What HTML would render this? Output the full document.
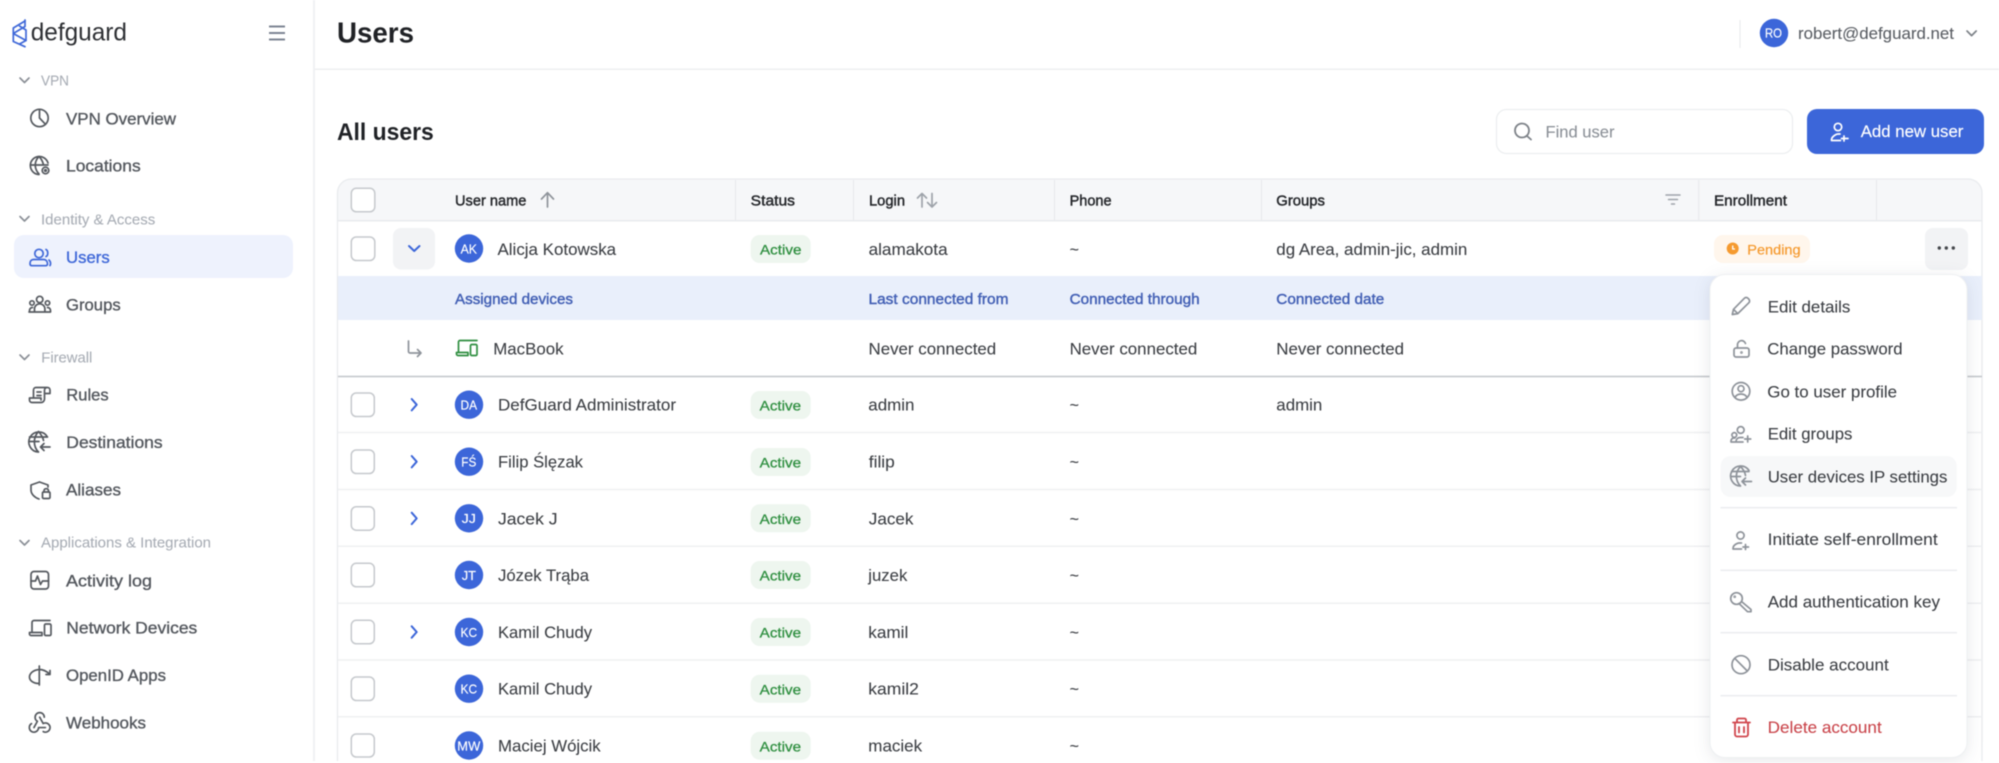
<!DOCTYPE html>
<html lang="en"><head><meta charset="utf-8"><title>Users</title>
<style>
html,body{margin:0;padding:0;background:#fff;width:1999px;height:763px;overflow:hidden}
svg{display:block;filter:blur(.4px)}
text{font-family:"Liberation Sans",sans-serif;font-size:17px;fill:#3c3f44;stroke:#3c3f44;stroke-width:.08}
.nav{fill:#54585e;stroke:#54585e;stroke-width:.35}
.sec{font-size:14.5px;fill:#a9aeb6;stroke:#a9aeb6;stroke-width:.1}
.hd{font-size:15px;fill:#26282c;stroke:#26282c;stroke-width:.45}
.sub{font-size:14.5px;fill:#4360b5;stroke:#4360b5;stroke-width:.42}
.act{font-size:14px;fill:#2f8f40;stroke:#2f8f40;stroke-width:.3}
.av{font-size:13px;fill:#fff;stroke:#fff;stroke-width:.15}
.i{fill:none;stroke:#55595f;stroke-width:1.7;stroke-linecap:round;stroke-linejoin:round}
.mi{fill:none;stroke:#8e939a;stroke-width:1.7;stroke-linecap:round;stroke-linejoin:round}
.cb{fill:#fff;stroke:#c6c9cd;stroke-width:1.5}
.sep{stroke:#eff0f2;stroke-width:1.5}
.dv{stroke:#e9ebee;stroke-width:1.3}
.colsep{stroke:#e6e8eb;stroke-width:1}
.chev{fill:none;stroke:#3c66d9;stroke-width:2;stroke-linecap:round;stroke-linejoin:round}
</style></head><body>
<svg width="1999" height="763" viewBox="0 0 1999 763" xmlns="http://www.w3.org/2000/svg">
<rect width="1999" height="763" fill="#fff"/>

<!-- sidebar -->
<rect x="313" y="0" width="2" height="761" fill="#f0f1f3"/>
<g fill="none" stroke="#3f68d8" stroke-width="1.7" stroke-linejoin="round" stroke-linecap="round">
<path d="M25 21L13.300 28V41.500L25 46.700"/>
<path d="M25 20v6.500L13.300 33.500"/>
<path d="M13.300 33.500L26 40.500V30L19.500 26"/>
<path d="M26 40.500L19.500 44"/>
</g>
<text x="30.700" y="40.700" textLength="96.300" lengthAdjust="spacingAndGlyphs" style="font-size:25px;fill:#2e3034;stroke:none">defguard</text>
<path d="M269 26.500h16M269 33h16M269 39.500h16" stroke="#7d8593" stroke-width="2"/>

<g fill="none" stroke="#8b9097" stroke-width="1.700" stroke-linecap="round" stroke-linejoin="round">
<path d="M20 78l4.500 4.500L29 78"/><path d="M20 216.500l4.500 4.500 4.500-4.500"/><path d="M20 355l4.500 4.500 4.500-4.500"/><path d="M20 540.500l4.500 4.500 4.500-4.500"/>
</g>
<text class="sec" x="41" y="85.700" textLength="28" lengthAdjust="spacingAndGlyphs">VPN</text>
<text class="sec" x="41" y="224.300" textLength="114.300" lengthAdjust="spacingAndGlyphs">Identity &amp; Access</text>
<text class="sec" x="41.300" y="362.300" textLength="51" lengthAdjust="spacingAndGlyphs">Firewall</text>
<text class="sec" x="41" y="547.700" textLength="170" lengthAdjust="spacingAndGlyphs">Applications &amp; Integration</text>

<rect x="14" y="235" width="279" height="43" rx="10" fill="#eef2fd"/>

<text class="nav" x="66" y="124.300" textLength="110" lengthAdjust="spacingAndGlyphs">VPN Overview</text>
<text class="nav" x="66" y="171.500" textLength="74.700" lengthAdjust="spacingAndGlyphs">Locations</text>
<text class="nav" x="66" y="263" textLength="43.700" lengthAdjust="spacingAndGlyphs" style="fill:#3f68d8;stroke:#3f68d8">Users</text>
<text class="nav" x="66" y="310.300" textLength="54.700" lengthAdjust="spacingAndGlyphs">Groups</text>
<text class="nav" x="66.300" y="400.700" textLength="42.400" lengthAdjust="spacingAndGlyphs">Rules</text>
<text class="nav" x="66.300" y="448" textLength="96.400" lengthAdjust="spacingAndGlyphs">Destinations</text>
<text class="nav" x="66" y="495.300" textLength="55" lengthAdjust="spacingAndGlyphs">Aliases</text>
<text class="nav" x="66" y="586.300" textLength="86" lengthAdjust="spacingAndGlyphs">Activity log</text>
<text class="nav" x="66.300" y="633.600" textLength="131" lengthAdjust="spacingAndGlyphs">Network Devices</text>
<text class="nav" x="66" y="681" textLength="100" lengthAdjust="spacingAndGlyphs">OpenID Apps</text>
<text class="nav" x="66" y="728.300" textLength="80" lengthAdjust="spacingAndGlyphs">Webhooks</text>

<!-- nav icons -->
<g class="i">
<circle cx="39.500" cy="118" r="8.700"/><path d="M39.500 109.300V118l6 6.300"/>
<path d="M48 163a9 9 0 1 0-9 11.500M30.500 165h17.500M39 156.500c-5 5-5 12 0 17.500M39 156.500c3 3 4 6 4.500 8.500"/><circle cx="45.500" cy="170.500" r="3.300"/><circle cx="45.500" cy="170.500" r=".8"/>
<circle cx="39.700" cy="299.500" r="3.200"/><circle cx="32" cy="303" r="2.200"/><circle cx="47.500" cy="303" r="2.200"/><path d="M29 312h21.500M29.500 312v-1.500a3 3 0 0 1 3-3M50.500 312v-1.500a3 3 0 0 0-3-3M34.500 312v-3a5.200 5.200 0 0 1 10.400 0v3"/>
<path d="M33.500 398V390a2.500 2.500 0 0 1 2.500-2.500h11.500a2.500 2.500 0 0 1 2.500 2.500v3.500H44.500M47.500 387.500a2.700 2.700 0 0 0-3 2.700V399a3.500 3.500 0 0 1-3.500 3.500H32a2.500 2.500 0 0 1-2.500-2.500v-2h11.500v2M37 392h4M37 395.500h4"/>
<path d="M47.500 437a10 10 0 1 0-9 15M29 441.500h10M29.500 437h18M38.500 431.500c-5.500 6-5.500 15 0 20.500M38.500 431.500c3 3.500 4.500 6 5 9"/><path d="M50 447H40.500M44 443.500L40.500 447l3.500 3.500"/>
<path d="M39.500 482l-8.500 3v5c0 4 3.500 7.500 8 9M39.500 482l8.500 3v2"/><rect x="42.500" y="492" width="7.500" height="6.500" rx="1.200"/><path d="M44 492v-1.500a2.300 2.300 0 0 1 4.500 0V492"/>
<rect x="31" y="571.500" width="17.500" height="17.500" rx="3"/><path d="M31 581h4.500l2-5 3 8.500 2-3.500H48.500"/>
<path d="M32 632v-9.500a2 2 0 0 1 2-2h16"/><path d="M29.500 633.500v.5a1.500 1.500 0 0 0 1.500 1.500h11v-3h-12.500z"/><rect x="44.500" y="624" width="6.500" height="11.500" rx="1.300"/>
<path d="M39.300 666V685M39.300 669.500C33 670 29.500 673.500 29.500 677c0 3.500 3.500 6.500 9.800 6.500M39.300 669.500c4 0 7 1.500 10.200 4.500M50 670.500v4h-4"/>
<g transform="translate(25.900 708) scale(1.150)" stroke-width="1.480"><path d="M4.876 13.610a4 4 0 1 0 6.124 3.390h6M15.066 20.502a4 4 0 1 0 1.934-7.502c-.706 0-1.424.179-2 .5l-3-5.500M16 8a4 4 0 1 0-8 0c0 1.506.770 2.818 2 3.500l-3 5.500"/></g>
</g>
<g class="i" style="stroke:#3f68d8">
<circle cx="39" cy="253.500" r="4.200"/><path d="M30 263.500c0-2.500 1.500-4 3.500-4h10c2.500 0 4 2 4 4.500 0 1-.8 1.700-1.800 1.700H31.800c-1 0-1.800-.7-1.800-2.200z"/><path d="M46 249.500c2.200 1 2.500 6 0 7M50 265.500c1-1.500.7-4-1-5.500"/>
</g>

<!-- header -->
<rect x="315" y="68.500" width="1684" height="1.500" fill="#eeeff1"/>
<text x="337" y="42.700" textLength="77" lengthAdjust="spacingAndGlyphs" style="font-size:28.500px;font-weight:700;fill:#202226;stroke:none">Users</text>
<rect x="1739.500" y="20" width="1" height="28" fill="#e8e9eb"/>
<circle cx="1774" cy="33" r="14.200" fill="#3c66d9"/>
<text class="av" x="1773.500" y="37.700" text-anchor="middle" textLength="17" lengthAdjust="spacingAndGlyphs">RO</text>
<text x="1798" y="39" textLength="156" lengthAdjust="spacingAndGlyphs" style="font-size:16.500px;fill:#5a5e64;stroke:#5a5e64">robert@defguard.net</text>
<path d="M1967 31l4.600 4.600 4.600-4.600" fill="none" stroke="#7d8288" stroke-width="1.700" stroke-linecap="round" stroke-linejoin="round"/>

<text x="337" y="140" textLength="96.800" lengthAdjust="spacingAndGlyphs" style="font-size:24px;font-weight:700;fill:#202226;stroke:none">All users</text>
<rect x="1496.500" y="109.500" width="296" height="44" rx="10" fill="#fff" stroke="#eceef0" stroke-width="1.300"/>
<g fill="none" stroke="#7d8288" stroke-width="1.800" stroke-linecap="round"><circle cx="1522" cy="130.500" r="7"/><path d="M1527 136l4 3.500"/></g>
<text x="1545.500" y="137.300" textLength="69" lengthAdjust="spacingAndGlyphs" style="font-size:16.500px;fill:#8b9097;stroke:#8b9097">Find user</text>
<rect x="1807" y="109" width="177" height="45" rx="10" fill="#3c66d9"/>
<g fill="none" stroke="#fff" stroke-width="1.700" stroke-linecap="round" stroke-linejoin="round"><circle cx="1838" cy="127" r="3.700"/><path d="M1831.500 140.500c0-1 .2-2.500 1.200-3.500s3-3 5.300-3h2M1832 140.500h8.500M1844 136v5M1841.500 138.500h6.500"/></g>
<text x="1860.700" y="137" textLength="102.700" lengthAdjust="spacingAndGlyphs" style="font-size:17px;fill:#fff;stroke:#fff;stroke-width:.15">Add new user</text>

<!-- table head -->
<path d="M337.500 221V193a14 14 0 0 1 14-14H1968a14 14 0 0 1 14 14v28z" fill="#f6f7f9"/>
<path d="M337.500 761V193a14 14 0 0 1 14-14H1968a14 14 0 0 1 14 14V761" fill="none" stroke="#e9ebee" stroke-width="1.300"/>
<rect x="338" y="220" width="1644" height="1.500" fill="#e9ebee"/>
<path class="colsep" d="M735.500 180v40M853.500 180v40M1054.500 180v40M1261.500 180v40M1698.700 180v40M1876.500 180v40"/>
<rect class="cb" x="351.300" y="188.300" width="23.500" height="23.500" rx="5"/>
<text class="hd" x="455" y="205.300" textLength="71.400" lengthAdjust="spacingAndGlyphs">User name</text>
<path d="M547.500 207V193M541.500 199l6-6.300 6 6.300" fill="none" stroke="#8f949b" stroke-width="1.700" stroke-linecap="round" stroke-linejoin="round"/>
<text class="hd" x="750.700" y="205.300" textLength="44.300" lengthAdjust="spacingAndGlyphs">Status</text>
<text class="hd" x="869" y="205.300" textLength="36" lengthAdjust="spacingAndGlyphs">Login</text>
<path d="M922 207V193.500M917.500 198l4.500-4.500 4.500 4.500M932 193.500V207M927.500 202.500l4.500 4.500 4.500-4.500" fill="none" stroke="#9ea3aa" stroke-width="1.700" stroke-linecap="round" stroke-linejoin="round"/>
<text class="hd" x="1069.600" y="205.300" textLength="42" lengthAdjust="spacingAndGlyphs">Phone</text>
<text class="hd" x="1276.300" y="205.300" textLength="48.700" lengthAdjust="spacingAndGlyphs">Groups</text>
<path d="M1666 195h14M1668.500 199.500h9M1671.500 204h3" stroke="#9ea3aa" stroke-width="1.500" stroke-linecap="round"/>
<text class="hd" x="1714" y="205.300" textLength="73" lengthAdjust="spacingAndGlyphs">Enrollment</text>

<!-- row 1 -->
<rect class="cb" x="351.300" y="237" width="23.500" height="23.500" rx="5"/>
<rect x="393" y="228" width="42" height="41.500" rx="8" fill="#f2f3f5"/>
<path class="chev" d="M409 246l5.200 5 5.300-5"/>
<circle cx="469" cy="248.500" r="14.200" fill="#3c66d9"/>
<text class="av" x="468.800" y="253.300" text-anchor="middle" textLength="16.400" lengthAdjust="spacingAndGlyphs">AK</text>
<text x="497.500" y="255" textLength="118.600" lengthAdjust="spacingAndGlyphs">Alicja Kotowska</text>
<rect x="750.700" y="235" width="60" height="28" rx="9" fill="#eef6ef"/>
<text class="act" x="760" y="254.300" textLength="41.400" lengthAdjust="spacingAndGlyphs">Active</text>
<text x="868.600" y="255" textLength="79" lengthAdjust="spacingAndGlyphs">alamakota</text>
<text x="1069.600" y="255" style="font-size:16px">~</text>
<text x="1276.300" y="255" textLength="191" lengthAdjust="spacingAndGlyphs">dg Area, admin-jic, admin</text>
<rect x="1714" y="235" width="96" height="28" rx="9" fill="#fff6ec"/>
<circle cx="1732.700" cy="248.500" r="6" fill="#f59a2f"/><path d="M1732.700 245.500v3.500h2.300" fill="none" stroke="#fff" stroke-width="1.300"/>
<text x="1747.300" y="254.300" textLength="53.300" lengthAdjust="spacingAndGlyphs" style="font-size:14px;fill:#f59a2f;stroke:#f59a2f;stroke-width:.2">Pending</text>
<rect x="1925" y="228" width="43" height="42" rx="8" fill="#f2f3f5"/>
<circle cx="1939.300" cy="248" r="1.700" fill="#44474b"/><circle cx="1946.300" cy="248" r="1.700" fill="#44474b"/><circle cx="1953.300" cy="248" r="1.700" fill="#44474b"/>

<!-- subheader -->
<rect x="338" y="276" width="1644" height="44" fill="#e9effb"/>
<text class="sub" x="455" y="304" textLength="118" lengthAdjust="spacingAndGlyphs">Assigned devices</text>
<text class="sub" x="868.500" y="304" textLength="140" lengthAdjust="spacingAndGlyphs">Last connected from</text>
<text class="sub" x="1069.600" y="304" textLength="130" lengthAdjust="spacingAndGlyphs">Connected through</text>
<text class="sub" x="1276.300" y="304" textLength="108" lengthAdjust="spacingAndGlyphs">Connected date</text>

<!-- device row -->
<path d="M408.500 341v10.500a1.500 1.500 0 0 0 1.500 1.500h11M417.500 349.500l3.500 3.500-3.500 3.500" fill="none" stroke="#8f949b" stroke-width="1.700" stroke-linecap="round" stroke-linejoin="round"/>
<g fill="none" stroke="#2f8f40" stroke-width="1.700" stroke-linecap="round" stroke-linejoin="round">
<path d="M458.500 352v-10a1.500 1.500 0 0 1 1.500-1.500h17"/><path d="M456.500 352.500h11.500v3h-10a1.500 1.500 0 0 1-1.500-1.500z"/><rect x="470.500" y="344.500" width="6.500" height="11" rx="1.300"/>
</g>
<text x="493.200" y="354.300" textLength="70.400" lengthAdjust="spacingAndGlyphs">MacBook</text>
<text x="868.500" y="354.300" textLength="127.700" lengthAdjust="spacingAndGlyphs">Never connected</text>
<text x="1069.600" y="354.300" textLength="127.700" lengthAdjust="spacingAndGlyphs">Never connected</text>
<text x="1276.300" y="354.300" textLength="127.700" lengthAdjust="spacingAndGlyphs">Never connected</text>
<rect x="338" y="375.700" width="1644" height="1.600" fill="#c5c8cc"/>

<!-- rows -->
<path class="sep" d="M338 432.500H1982M338 489.500H1982M338 546.300H1982M338 603.200H1982M338 660H1982M338 716.800H1982"/>

<rect class="cb" x="351.300" y="393" width="23" height="23.500" rx="5"/>
<path class="chev" d="M411.700 399l5 5.700-5 5.700"/>
<circle cx="469" cy="404.700" r="14.200" fill="#3c66d9"/>
<text class="av" x="468.800" y="409.600" text-anchor="middle" textLength="16.600" lengthAdjust="spacingAndGlyphs">DA</text>
<text x="498" y="410.700" textLength="178" lengthAdjust="spacingAndGlyphs">DefGuard Administrator</text>
<rect x="750.700" y="391" width="60" height="28" rx="9" fill="#eef6ef"/>
<text class="act" x="759.700" y="410.500" textLength="41.400" lengthAdjust="spacingAndGlyphs">Active</text>
<text x="868.300" y="410.700" textLength="46.200" lengthAdjust="spacingAndGlyphs">admin</text>
<text x="1069.600" y="410.700" style="font-size:16px">~</text>
<text x="1276.300" y="410.700" textLength="46" lengthAdjust="spacingAndGlyphs">admin</text>

<rect class="cb" x="351.300" y="450" width="23" height="23.500" rx="5"/>
<path class="chev" d="M411.700 456l5 5.700-5 5.700"/>
<circle cx="469" cy="461.700" r="14.200" fill="#3c66d9"/>
<text class="av" x="468.800" y="466.600" text-anchor="middle" textLength="15" lengthAdjust="spacingAndGlyphs">FŚ</text>
<text x="498" y="467.700" textLength="85" lengthAdjust="spacingAndGlyphs" style="font-family:'Liberation Sans','DejaVu Sans',sans-serif">Filip Ślęzak</text>
<rect x="750.700" y="448" width="60" height="28" rx="9" fill="#eef6ef"/>
<text class="act" x="759.700" y="467.500" textLength="41.400" lengthAdjust="spacingAndGlyphs">Active</text>
<text x="868.800" y="467.700" textLength="26" lengthAdjust="spacingAndGlyphs">filip</text>
<text x="1069.600" y="467.700" style="font-size:16px">~</text>

<rect class="cb" x="351.300" y="506.700" width="23" height="23.500" rx="5"/>
<path class="chev" d="M411.700 512.700l5 5.700-5 5.700"/>
<circle cx="469" cy="518.300" r="14.200" fill="#3c66d9"/>
<text class="av" x="468.800" y="523.200" text-anchor="middle" textLength="14.200" lengthAdjust="spacingAndGlyphs">JJ</text>
<text x="498" y="524.300" textLength="59.500" lengthAdjust="spacingAndGlyphs">Jacek J</text>
<rect x="750.700" y="504.300" width="60" height="28" rx="9" fill="#eef6ef"/>
<text class="act" x="759.700" y="524" textLength="41.400" lengthAdjust="spacingAndGlyphs">Active</text>
<text x="868.800" y="524.300" textLength="44.700" lengthAdjust="spacingAndGlyphs">Jacek</text>
<text x="1069.600" y="524.300" style="font-size:16px">~</text>

<rect class="cb" x="351.300" y="563.300" width="23" height="23.500" rx="5"/>
<circle cx="469" cy="575" r="14.200" fill="#3c66d9"/>
<text class="av" x="468.800" y="579.900" text-anchor="middle" textLength="14.200" lengthAdjust="spacingAndGlyphs">JT</text>
<text x="498" y="581" textLength="91" lengthAdjust="spacingAndGlyphs">Józek Trąba</text>
<rect x="750.700" y="561" width="60" height="28" rx="9" fill="#eef6ef"/>
<text class="act" x="759.700" y="580.700" textLength="41.400" lengthAdjust="spacingAndGlyphs">Active</text>
<text x="868.300" y="581" textLength="39" lengthAdjust="spacingAndGlyphs">juzek</text>
<text x="1069.600" y="581" style="font-size:16px">~</text>

<rect class="cb" x="351.300" y="620.300" width="23" height="23.500" rx="5"/>
<path class="chev" d="M411.700 626.300l5 5.700-5 5.700"/>
<circle cx="469" cy="632" r="14.200" fill="#3c66d9"/>
<text class="av" x="468.800" y="636.900" text-anchor="middle" textLength="16.600" lengthAdjust="spacingAndGlyphs">KC</text>
<text x="498" y="638" textLength="94" lengthAdjust="spacingAndGlyphs">Kamil Chudy</text>
<rect x="750.700" y="618" width="60" height="28" rx="9" fill="#eef6ef"/>
<text class="act" x="759.700" y="637.700" textLength="41.400" lengthAdjust="spacingAndGlyphs">Active</text>
<text x="868.300" y="638" textLength="40" lengthAdjust="spacingAndGlyphs">kamil</text>
<text x="1069.600" y="638" style="font-size:16px">~</text>

<rect class="cb" x="351.300" y="677" width="23" height="23.500" rx="5"/>
<circle cx="469" cy="688.700" r="14.200" fill="#3c66d9"/>
<text class="av" x="468.800" y="693.600" text-anchor="middle" textLength="16.600" lengthAdjust="spacingAndGlyphs">KC</text>
<text x="498" y="694.700" textLength="94" lengthAdjust="spacingAndGlyphs">Kamil Chudy</text>
<rect x="750.700" y="674.700" width="60" height="28" rx="9" fill="#eef6ef"/>
<text class="act" x="759.700" y="694.400" textLength="41.400" lengthAdjust="spacingAndGlyphs">Active</text>
<text x="868.300" y="694.700" textLength="50.600" lengthAdjust="spacingAndGlyphs">kamil2</text>
<text x="1069.600" y="694.700" style="font-size:16px">~</text>

<rect class="cb" x="351.300" y="734" width="23" height="23" rx="5"/>
<circle cx="469" cy="745.500" r="14.200" fill="#3c66d9"/>
<text class="av" x="468.800" y="750.300" text-anchor="middle" textLength="23" lengthAdjust="spacingAndGlyphs">MW</text>
<text x="498" y="751.700" textLength="102.700" lengthAdjust="spacingAndGlyphs">Maciej Wójcik</text>
<rect x="750.700" y="731.700" width="60" height="28" rx="9" fill="#eef6ef"/>
<text class="act" x="759.700" y="751.400" textLength="41.400" lengthAdjust="spacingAndGlyphs">Active</text>
<text x="868.300" y="751.700" textLength="53.800" lengthAdjust="spacingAndGlyphs">maciek</text>
<text x="1069.600" y="751.700" style="font-size:16px">~</text>

<rect x="0" y="761.500" width="1999" height="2" fill="#fff"/>

<!-- menu -->
<rect x="1710" y="274.500" width="257" height="483" rx="15" fill="#fff" stroke="#eef0f2" stroke-width="1" style="filter:drop-shadow(0 3px 8px rgba(30,40,60,.1))"/>
<rect x="1720.700" y="456" width="236" height="41" rx="10" fill="#f7f8f9"/>
<path class="dv" d="M1720.500 507.700H1957M1720.500 570.300H1957M1720.500 632.700H1957M1720.500 695.700H1957"/>

<text x="1767.700" y="312.700" textLength="82.700" lengthAdjust="spacingAndGlyphs">Edit details</text>
<text x="1767.300" y="354.300" textLength="135.300" lengthAdjust="spacingAndGlyphs">Change password</text>
<text x="1767.300" y="397.300" textLength="129.700" lengthAdjust="spacingAndGlyphs">Go to user profile</text>
<text x="1767.700" y="439.700" textLength="84.700" lengthAdjust="spacingAndGlyphs">Edit groups</text>
<text x="1767.700" y="482.700" textLength="179.700" lengthAdjust="spacingAndGlyphs">User devices IP settings</text>
<text x="1767.700" y="545" textLength="170" lengthAdjust="spacingAndGlyphs">Initiate self-enrollment</text>
<text x="1767.700" y="607.700" textLength="172.300" lengthAdjust="spacingAndGlyphs">Add authentication key</text>
<text x="1767.700" y="670.300" textLength="121" lengthAdjust="spacingAndGlyphs">Disable account</text>
<text x="1767.700" y="733" textLength="114" lengthAdjust="spacingAndGlyphs" style="fill:#c9444a;stroke:#c9444a">Delete account</text>

<g class="mi">
<path d="M1732.300 314.500l1.200-5.200 10.800-11a2.600 2.600 0 0 1 3.700 0l.8.800a2.600 2.600 0 0 1 0 3.700l-11 10.800zM1733.500 309.300l4 4"/>
<rect x="1734" y="348" width="15" height="9" rx="2"/><path d="M1737.500 348v-3a4.100 4.100 0 0 1 8-1.500"/><circle cx="1741.500" cy="352.500" r=".5"/>
<circle cx="1741" cy="391.300" r="8.800"/><circle cx="1741" cy="388.700" r="3"/><path d="M1735 397.500c.8-2.300 3.500-3.500 6-3.500s5.200 1.200 6 3.500"/>
<circle cx="1740.700" cy="430" r="3.400"/><circle cx="1734.300" cy="435" r="2.400"/><path d="M1731 442v-1a3 3 0 0 1 3-3h1M1731 442h12M1736 442v-.5a4 4 0 0 1 4-4h3M1747.700 436v6M1744.700 439h6"/>
<path d="M1749 470.500a10 10 0 1 0-8.500 15.500M1731 476.500h9.500M1731.500 471.500h17.500M1740.500 466.500c-5.500 5.500-5.500 14 0 19.500M1740.500 466.500c3 3 4.500 6 5 9"/><path d="M1751.500 481.500h-9.500M1745.500 478l-3.500 3.500 3.500 3.500"/>
<circle cx="1740.500" cy="535.500" r="3.600"/><path d="M1733 549c0-.8.200-2.500 1.200-3.500s3-2.500 5.300-2.500h2M1733.500 549h8M1745.500 544.500v5M1743 547h5.500"/>
<circle cx="1736.500" cy="598.500" r="5.800"/><circle cx="1734.700" cy="596.700" r=".5"/><path d="M1741.500 601.500L1751 609.500v2.200h-3.500L1739 603.500"/>
<circle cx="1741" cy="664.700" r="9"/><path d="M1734.700 658.300l12.600 12.700"/>
</g>
<g fill="none" stroke="#d0454c" stroke-width="1.800" stroke-linecap="round" stroke-linejoin="round">
<path d="M1733 722.500h17M1737 722.500v-2.500a1.500 1.500 0 0 1 1.500-1.500h6a1.500 1.500 0 0 1 1.500 1.500v2.500M1735 722.500v12a2 2 0 0 0 2 2h9a2 2 0 0 0 2-2v-12M1739 727v5.500M1744 727v5.500"/>
</g>
</svg>
</body></html>
